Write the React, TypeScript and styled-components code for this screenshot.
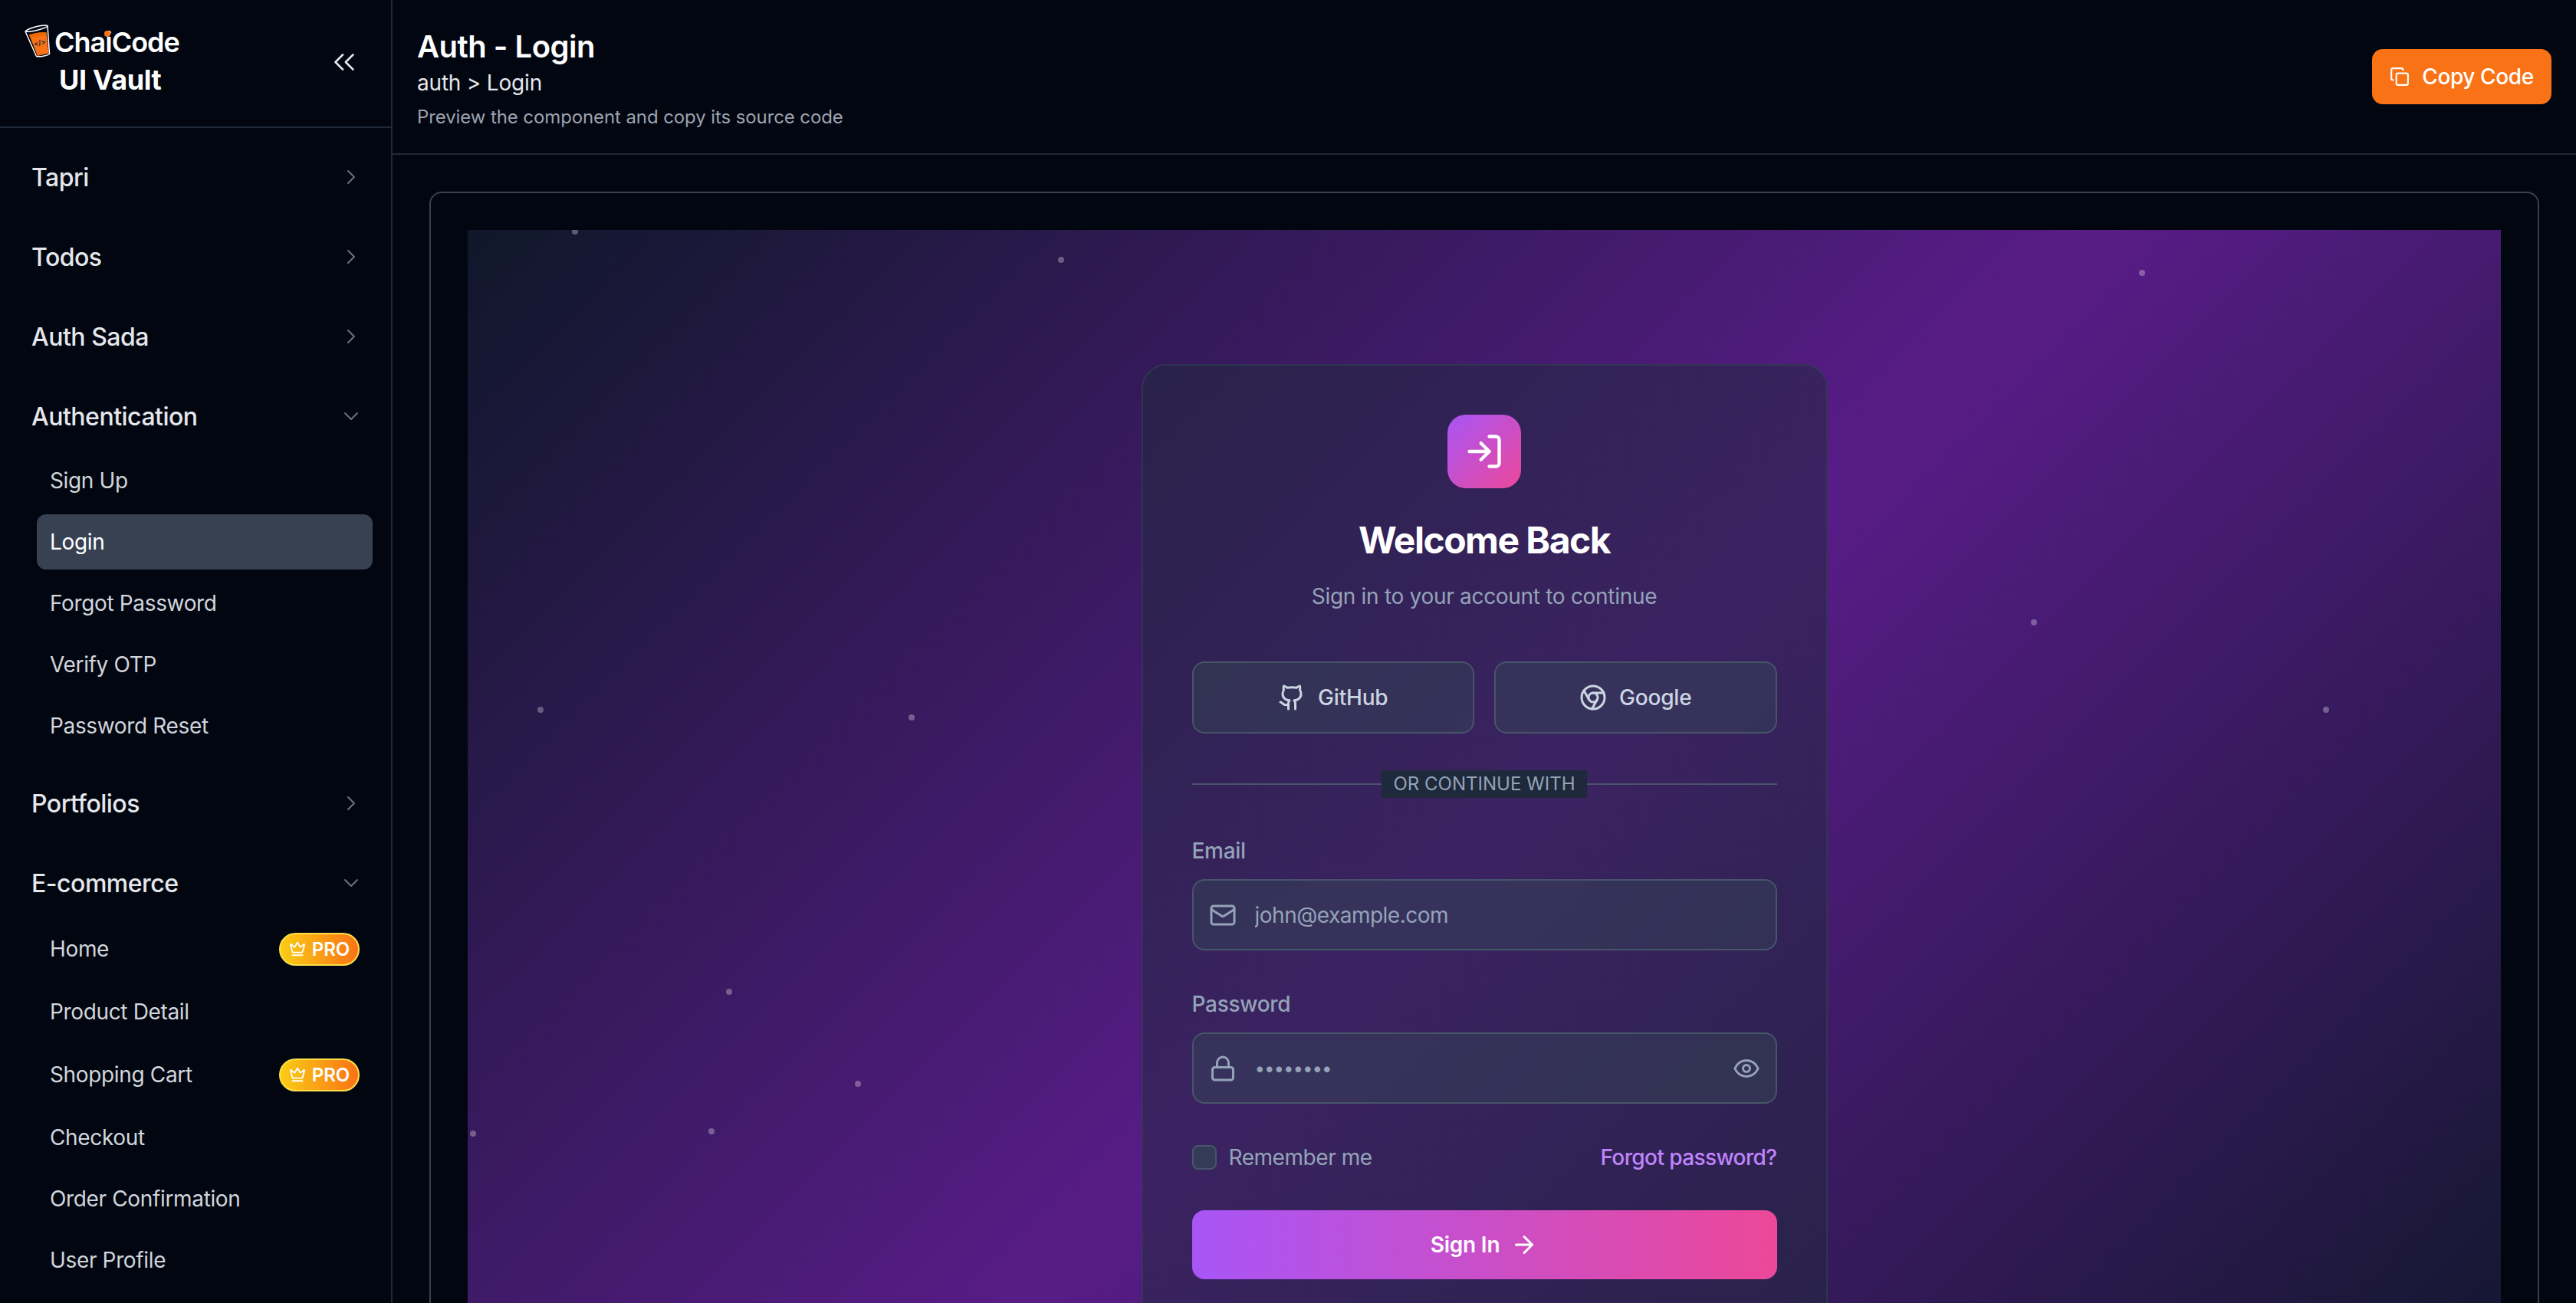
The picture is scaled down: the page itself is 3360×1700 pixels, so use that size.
import React from "react";
import styled, { createGlobalStyle } from "styled-components";
import {
  ArrowRight, ChevronDown, ChevronRight, ChevronsLeft, Chrome, Copy, Crown,
  Eye, Github, Lock, LogIn, Mail,
} from "lucide-react";

const Global = createGlobalStyle`
  * { box-sizing: border-box; }
  html, body { margin: 0; height: 100%; background: #020611; overflow: hidden; }
  body { font-family: Inter, "Liberation Sans", sans-serif; -webkit-font-smoothing: antialiased; }
`;

const Shell = styled.div`
  display: flex;
  height: 100vh;
  overflow: hidden;
  background: #020611;
`;

const Sidebar = styled.aside`
  flex: 0 0 512px;
  border-right: 2px solid #1f2937;
  display: flex;
  flex-direction: column;
`;

const Brand = styled.div`
  height: 167px;
  border-bottom: 2px solid #1f2937;
  padding: 32px 38px 0 32px;
  display: flex;
  justify-content: space-between;
  align-items: flex-start;
`;

const BrandStack = styled.div`
  display: flex;
  flex-direction: column;
`;

const BrandTop = styled.div`
  display: flex;
  align-items: flex-start;
  gap: 5px;
  height: 44px;
`;

const BrandName = styled.span`
  position: relative;
  font-size: 36px;
  font-weight: 600;
  letter-spacing: -1px;
  line-height: 44px;
  color: #fff;
  margin-top: 1px;
`;

const BrandDot = styled.i`
  position: absolute;
  left: 65px;
  top: 7px;
  width: 8px;
  height: 8px;
  border-radius: 50%;
  background: #f97316;
`;

const BrandSub = styled.span`
  font-size: 36px;
  font-weight: 700;
  letter-spacing: -0.4px;
  line-height: 44px;
  color: #fff;
  margin: 6px 0 0 45px;
`;

const CollapseButton = styled.button`
  background: none;
  border: 0;
  padding: 0;
  margin-top: 26px;
  color: #e5e7eb;
  display: flex;
`;

const Nav = styled.nav`
  padding: 12px 24px 0 24px;
  display: flex;
  flex-direction: column;
`;

const Group = styled.section<{ $open?: boolean }>`
  padding: 20px 0 ${(p) => (p.$open ? "13px" : "20px")};
`;

const GroupHead = styled.div`
  height: 64px;
  padding: 0 12px 0 17px;
  display: flex;
  justify-content: space-between;
  align-items: center;
  color: #e5e7eb;
  font-size: 32px;
  font-weight: 500;
  letter-spacing: -0.5px;
  & > svg { color: #6b7280; }
`;

const SubList = styled.ul`
  list-style: none;
  margin: 16px 0 0 24px;
  padding: 0;
  display: flex;
  flex-direction: column;
  gap: 8px;
`;

const SubItem = styled.li<{ $active?: boolean; $pro?: boolean }>`
  height: ${(p) => (p.$pro ? "76px" : "72px")};
  padding: 0 17px;
  display: flex;
  align-items: center;
  justify-content: space-between;
  font-size: 28px;
  letter-spacing: -0.35px;
  color: ${(p) => (p.$active ? "#fff" : "#d1d5db")};
  background: ${(p) => (p.$active ? "#374151" : "transparent")};
  border-radius: 12px;
`;

const ProBadge = styled.span`
  width: 105px;
  height: 43px;
  border: 2px solid #fde047;
  border-radius: 22px;
  background: linear-gradient(90deg, #facc15, #f97316);
  display: flex;
  align-items: center;
  justify-content: center;
  gap: 8px;
  color: #fff;
  font-size: 24px;
  font-weight: 600;
  letter-spacing: 0;
`;

const Main = styled.main`
  flex: 1;
  min-width: 0;
  display: flex;
  flex-direction: column;
`;

const TopBar = styled.header`
  flex: 0 0 202px;
  border-bottom: 2px solid #1f2937;
  padding: 0 32px;
  display: flex;
  justify-content: space-between;
  align-items: flex-start;
`;

const TitleBlock = styled.div`
  padding-top: 36px;
  display: flex;
  flex-direction: column;
`;

const PageTitle = styled.h1`
  margin: 0;
  font-size: 40px;
  font-weight: 600;
  letter-spacing: -0.5px;
  line-height: 50px;
  color: #fff;
`;

const Crumb = styled.div`
  font-size: 28px;
  line-height: 40px;
  margin-top: 2px;
  letter-spacing: -0.2px;
  color: #e5e7eb;
`;

const PageNote = styled.div`
  font-size: 24px;
  line-height: 32px;
  margin-top: 9px;
  letter-spacing: -0.1px;
  color: #9ca3af;
`;

const CopyButton = styled.button`
  margin-top: 64px;
  height: 72px;
  width: 234px;
  border: 0;
  border-radius: 14px;
  background: #f97316;
  color: #fff;
  font: 500 28px Inter, sans-serif;
  letter-spacing: -0.4px;
  display: flex;
  align-items: center;
  justify-content: center;
  gap: 16px;
`;

const Body = styled.div`
  flex: 1;
  min-height: 0;
  padding: 48px;
`;

const Frame = styled.div`
  border: 2px solid #374151;
  border-radius: 16px;
  padding: 48px;
`;

const Stage = styled.div`
  position: relative;
  height: 1600px;
  overflow: hidden;
  padding-top: 175px;
  display: flex;
  justify-content: center;
  align-items: flex-start;
  background: linear-gradient(135deg, #0f172a 0%, #581c87 50%, #0f172a 100%);
`;

const Star = styled.i<{ $x: number; $y: number }>`
  position: absolute;
  left: ${(p) => p.$x - 614}px;
  top: ${(p) => p.$y - 304}px;
  width: 8px;
  height: 8px;
  border-radius: 50%;
  background: rgba(255, 255, 255, 0.3);
`;

const Card = styled.div`
  position: relative;
  width: 895px;
  padding: 64px;
  border: 2px solid rgba(51, 65, 85, 0.6);
  border-radius: 32px;
  background: rgba(30, 41, 59, 0.5);
  display: flex;
  flex-direction: column;
  align-items: stretch;
`;

const LogoTile = styled.div`
  align-self: center;
  width: 96px;
  height: 96px;
  border-radius: 24px;
  background: linear-gradient(135deg, #a855f7, #ec4899);
  color: #fff;
  display: flex;
  align-items: center;
  justify-content: center;
`;

const Heading = styled.h2`
  margin: 36px 0 0;
  text-align: center;
  font-size: 48px;
  line-height: 64px;
  font-weight: 700;
  letter-spacing: -1.5px;
  color: #fff;
`;

const Lead = styled.p`
  margin: 21px 0 0;
  text-align: center;
  font-size: 28px;
  line-height: 40px;
  letter-spacing: -0.3px;
  color: #94a3b8;
`;

const SocialRow = styled.div`
  margin-top: 65px;
  display: grid;
  grid-template-columns: 1fr 1fr;
  gap: 26px;
`;

const SocialButton = styled.button`
  height: 94px;
  border: 2px solid #475569;
  border-radius: 16px;
  background: rgba(51, 65, 85, 0.5);
  color: #cbd5e1;
  font: 500 28px Inter, sans-serif;
  letter-spacing: -0.2px;
  display: flex;
  align-items: center;
  justify-content: center;
  gap: 16px;
`;

const Divider = styled.div`
  margin-top: 48px;
  height: 36px;
  display: flex;
  align-items: center;
  &::before, &::after {
    content: "";
    flex: 1;
    height: 2px;
    background: #475569;
  }
`;

const DividerLabel = styled.span`
  width: 268px;
  height: 36px;
  background: #1e293b;
  color: #94a3b8;
  font-size: 24px;
  font-weight: 400;
  line-height: 36px;
  text-align: center;
`;

const FieldLabel = styled.label<{ $gap: number }>`
  display: block;
  margin-top: ${(p) => p.$gap}px;
  font-size: 28px;
  line-height: 40px;
  font-weight: 500;
  letter-spacing: -0.3px;
  color: #94a3b8;
`;

const FieldBox = styled.div`
  margin-top: 17px;
  height: 93px;
  border: 2px solid #475569;
  border-radius: 16px;
  background: rgba(51, 65, 85, 0.5);
  padding: 0 20px;
  display: flex;
  align-items: center;
  gap: 24px;
  color: #94a3b8;
`;

const FieldInput = styled.input<{ $secret?: boolean }>`
  flex: 1;
  min-width: 0;
  background: none;
  border: 0;
  outline: 0;
  padding: 0;
  font: 400 ${(p) => (p.$secret ? "24px" : "28px")} Inter, sans-serif;
  letter-spacing: ${(p) => (p.$secret ? "-1px" : "-0.5px")};
  color: #94a3b8;
  &::placeholder { color: #94a3b8; opacity: 1; }
`;

const OptionsRow = styled.div`
  margin-top: 50px;
  height: 40px;
  display: flex;
  justify-content: space-between;
  align-items: center;
`;

const RememberLabel = styled.label`
  display: flex;
  align-items: center;
  gap: 16px;
  font-size: 28px;
  letter-spacing: -0.45px;
  color: #94a3b8;
`;

const CheckBox = styled.span`
  width: 32px;
  height: 32px;
  border: 2px solid #475569;
  border-radius: 8px;
  background: rgba(51, 65, 85, 0.8);
`;

const ForgotLink = styled.a`
  font-size: 28px;
  font-weight: 500;
  letter-spacing: -0.6px;
  color: #c084fc;
`;

const SubmitButton = styled.button`
  margin-top: 49px;
  height: 90px;
  border: 0;
  border-radius: 16px;
  background: linear-gradient(90deg, #a855f7, #ec4899);
  color: #fff;
  font: 600 28px Inter, sans-serif;
  letter-spacing: -0.2px;
  display: flex;
  align-items: center;
  justify-content: center;
  gap: 14px;
`;

function GlassLogo() {
  return (
    <svg width="34" height="44" viewBox="0 0 34 44" fill="none">
      <path d="M6 13.5 C12 11 21 9.5 28.5 10.5 L31.5 37.5 L17 41 Z" fill="#f97316" />
      <path d="M6 13.5 C12 11 21 9.5 28.5 10.5 L29 15 C21 14 13 15.5 8 18 Z" fill="#ea6a00" />
      <path d="M1 9 L15.5 41.5 C20 42.5 29 41 32.5 38.5 L30 1.5 M1 9 C5 4.5 25 -0.5 30 1.5 C30 4.5 8 10.5 1 9 Z" stroke="#fff" strokeWidth="1.5" strokeLinejoin="round" />
      <text x="20" y="27" transform="rotate(-14 20 25)" textAnchor="middle" fontSize="9" fontWeight="700" fontFamily="Inter, sans-serif" fill="#1f2937">&lt;/&gt;</text>
    </svg>
  );
}

const stars: [number, number][] = [
  [750, 302], [1384, 339], [2794, 356], [2653, 812], [3034, 926], [705, 926],
  [1189, 936], [951, 1294], [1119, 1414], [617, 1479], [928, 1476],
];

type Entry = { label: string; active?: boolean; pro?: boolean };
type Section = { title: string; items?: Entry[] };

const sections: Section[] = [
  { title: "Tapri" },
  { title: "Todos" },
  { title: "Auth Sada" },
  {
    title: "Authentication",
    items: [
      { label: "Sign Up" },
      { label: "Login", active: true },
      { label: "Forgot Password" },
      { label: "Verify OTP" },
      { label: "Password Reset" },
    ],
  },
  { title: "Portfolios" },
  {
    title: "E-commerce",
    items: [
      { label: "Home", pro: true },
      { label: "Product Detail" },
      { label: "Shopping Cart", pro: true },
      { label: "Checkout" },
      { label: "Order Confirmation" },
      { label: "User Profile" },
    ],
  },
];

export default function App() {
  return (
    <Shell>
      <Global />
      <Sidebar>
        <Brand>
          <BrandStack>
            <BrandTop>
              <GlassLogo />
              <BrandName>
                ChaiCode
                <BrandDot />
              </BrandName>
            </BrandTop>
            <BrandSub>UI Vault</BrandSub>
          </BrandStack>
          <CollapseButton aria-label="Collapse">
            <ChevronsLeft size={46} strokeWidth={1.4} />
          </CollapseButton>
        </Brand>
        <Nav>
          {sections.map((s) => (
            <Group key={s.title} $open={!!s.items}>
              <GroupHead>
                {s.title}
                {s.items ? (
                  <ChevronDown size={32} strokeWidth={1.5} />
                ) : (
                  <ChevronRight size={32} strokeWidth={1.5} />
                )}
              </GroupHead>
              {s.items && (
                <SubList>
                  {s.items.map((it) => (
                    <SubItem key={it.label} $active={it.active} $pro={it.pro}>
                      {it.label}
                      {it.pro && (
                        <ProBadge>
                          <Crown size={22} strokeWidth={2} />
                          PRO
                        </ProBadge>
                      )}
                    </SubItem>
                  ))}
                </SubList>
              )}
            </Group>
          ))}
        </Nav>
      </Sidebar>
      <Main>
        <TopBar>
          <TitleBlock>
            <PageTitle>Auth - Login</PageTitle>
            <Crumb>auth &gt; Login</Crumb>
            <PageNote>Preview the component and copy its source code</PageNote>
          </TitleBlock>
          <CopyButton>
            <Copy size={26} strokeWidth={2} />
            Copy Code
          </CopyButton>
        </TopBar>
        <Body>
          <Frame>
            <Stage>
              {stars.map(([x, y]) => (
                <Star key={`${x}-${y}`} $x={x} $y={y} />
              ))}
              <Card>
                <LogoTile>
                  <LogIn size={52} strokeWidth={2} />
                </LogoTile>
                <Heading>Welcome Back</Heading>
                <Lead>Sign in to your account to continue</Lead>
                <SocialRow>
                  <SocialButton>
                    <Github size={36} strokeWidth={2} />
                    GitHub
                  </SocialButton>
                  <SocialButton>
                    <Chrome size={36} strokeWidth={2} />
                    Google
                  </SocialButton>
                </SocialRow>
                <Divider>
                  <DividerLabel>OR CONTINUE WITH</DividerLabel>
                </Divider>
                <FieldLabel $gap={49}>Email</FieldLabel>
                <FieldBox>
                  <Mail size={36} strokeWidth={2} />
                  <FieldInput type="email" placeholder="john@example.com" readOnly />
                </FieldBox>
                <FieldLabel $gap={50}>Password</FieldLabel>
                <FieldBox>
                  <Lock size={36} strokeWidth={2} />
                  <FieldInput $secret type="password" defaultValue="password" readOnly />
                  <Eye size={36} strokeWidth={2} />
                </FieldBox>
                <OptionsRow>
                  <RememberLabel>
                    <CheckBox />
                    Remember me
                  </RememberLabel>
                  <ForgotLink>Forgot password?</ForgotLink>
                </OptionsRow>
                <SubmitButton>
                  Sign In
                  <ArrowRight size={36} strokeWidth={2} />
                </SubmitButton>
              </Card>
            </Stage>
          </Frame>
        </Body>
      </Main>
    </Shell>
  );
}
